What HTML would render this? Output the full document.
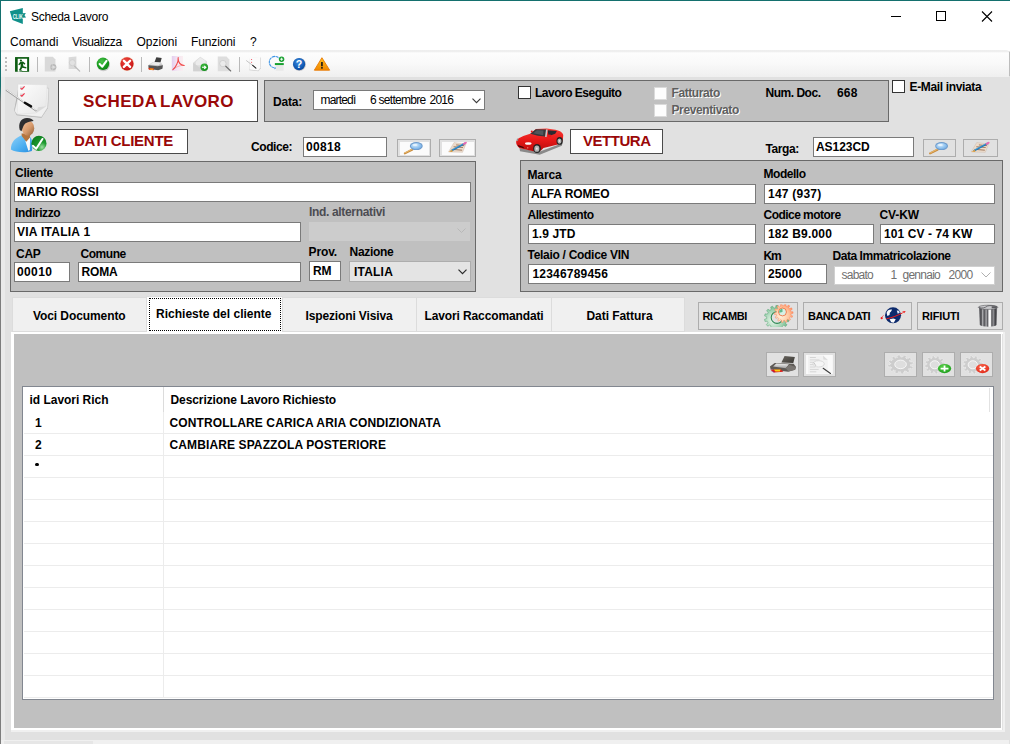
<!DOCTYPE html>
<html lang="it"><head><meta charset="utf-8"><title>Scheda Lavoro</title>
<style>
html,body{margin:0;padding:0}
body{width:1010px;height:744px;overflow:hidden;position:relative;background:#e1e1e1;font-family:"Liberation Sans",Arial,sans-serif;}
.a{position:absolute;box-sizing:content-box}
.t{position:absolute;white-space:pre;}
.dis{text-shadow:1px 1px 0 #fff}
svg{display:block;overflow:visible}
</style></head>
<body>
<div class="a" style="left:0px;top:0px;width:1010px;height:744px;background:#e1e1e1;"></div>
<div class="a" style="left:0px;top:0px;width:1010px;height:31px;background:#fff;"></div>
<div class="a" style="left:0px;top:31px;width:1010px;height:20px;background:#fff;"></div>
<div class="a" style="left:0px;top:50px;width:1009px;height:27px;background:linear-gradient(#eeeeee 0,#efefef 1.5px,#fdfdfd 3px,#f9f9f9 50%,#efefef 100%);border-radius:0 3px 0 0;"></div>
<div class="a" style="left:1009px;top:52px;width:1px;height:24px;background:#bdbdbd;"></div>
<div class="a" style="left:0px;top:0px;width:1010px;height:1px;background:#14706e;"></div>
<div class="a" style="left:0px;top:0px;width:1px;height:744px;background:linear-gradient(#14706e 0,#14706e 86px,#7d7d7d 102px,#7d7d7d);"></div>
<div class="a" style="left:1px;top:77px;width:4px;height:667px;background:#eaeaea;"></div>
<svg class="a" style="left:4px;top:2px;" width="30" height="28" viewBox="0 0 797 744"><path d="M155 245 L500 158 L500 300 L580 295 L545 350 L585 410 L500 420 L500 585 L225 475 Z" fill="#10908a"/><text x="232" y="445" font-family="Liberation Sans,sans-serif" font-weight="bold" font-size="195" fill="#eafcfb" textLength="268" lengthAdjust="spacingAndGlyphs">CLIK</text></svg>
<span class="t " style="left:31px;top:10px;font-size:12px;line-height:14px;color:#000;letter-spacing:-0.285px;">Scheda Lavoro</span>
<span class="t " style="left:10px;top:35px;font-size:12px;line-height:14px;color:#000;letter-spacing:0.053px;">Comandi</span>
<span class="t " style="left:72px;top:35px;font-size:12px;line-height:14px;color:#000;letter-spacing:-0.411px;">Visualizza</span>
<span class="t " style="left:136.5px;top:35px;font-size:12px;line-height:14px;color:#000;letter-spacing:-0.012px;">Opzioni</span>
<span class="t " style="left:191px;top:35px;font-size:12px;line-height:14px;color:#000;letter-spacing:-0.132px;">Funzioni</span>
<span class="t " style="left:250px;top:35px;font-size:12px;line-height:14px;color:#000;">?</span>
<svg class="a" style="left:880px;top:1px" width="130" height="30" viewBox="0 0 130 30"><g stroke="#000" stroke-width="1" fill="none" shape-rendering="crispEdges"><path d="M11 15.5h10"/><rect x="56.5" y="10.5" width="9" height="9"/></g><path d="M102 10.5l10 10M112 10.5l-10 10" stroke="#000" stroke-width="1.1" fill="none"/></svg>
<div class="a" style="left:5px;top:57px;width:2px;height:2px;background:#bcbcbc"></div>
<div class="a" style="left:5px;top:61px;width:2px;height:2px;background:#bcbcbc"></div>
<div class="a" style="left:5px;top:65px;width:2px;height:2px;background:#bcbcbc"></div>
<div class="a" style="left:5px;top:69px;width:2px;height:2px;background:#bcbcbc"></div>
<div class="a" style="left:37px;top:57px;width:1px;height:15px;background:#b9b9b9"></div>
<div class="a" style="left:89px;top:57px;width:1px;height:15px;background:#b9b9b9"></div>
<div class="a" style="left:141px;top:57px;width:1px;height:15px;background:#b9b9b9"></div>
<div class="a" style="left:239px;top:57px;width:1px;height:15px;background:#b9b9b9"></div>
<svg class="a" style="left:2px;top:52px;" width="90" height="26" viewBox="0 0 1010 292"><rect x="146" y="57" width="158" height="165" fill="#0d5c12"/><path d="M176 75 H282 V212 H222 V222 H176 Z" fill="#fff"/><path d="M282 180 H304 V222 H282Z" fill="#fff" opacity=".0"/><circle cx="212" cy="95" r="12" fill="#0d5c12"/><path d="M205 110 L235 108 L262 130 L255 142 L236 130 L240 160 L275 172 L272 186 L228 176 L212 205 L190 205 L208 168 L210 135 L192 150 L182 140 Z" fill="#0d5c12"/><rect x="196" y="207" width="30" height="12" fill="#0d5c12"/><path d="M480 52 H570 L600 85 V220 H480Z" fill="#d9d9d9"/><circle cx="576" cy="170" r="34" fill="#b9b9b9"/><circle cx="576" cy="170" r="16" fill="#e4e4e4"/><path d="M566 135v70M541 170h70" stroke="#d0d0d0" stroke-width="8"/><path d="M748 60 L835 50 V190 H748Z" fill="#dadada"/><circle cx="790" cy="120" r="34" fill="#e2e2e2" stroke="#cfcfcf" stroke-width="10"/><path d="M815 160 L872 215" stroke="#bdbdbd" stroke-width="14" stroke-linecap="round"/></svg>
<svg class="a" style="left:90px;top:52px;" width="90" height="26" viewBox="0 0 1010 292"><defs><radialGradient id="gck" cx=".4" cy=".3" r=".8"><stop offset="0" stop-color="#4cc24c"/><stop offset=".6" stop-color="#169a1c"/><stop offset="1" stop-color="#0d7a14"/></radialGradient><radialGradient id="grx" cx=".4" cy=".3" r=".8"><stop offset="0" stop-color="#ee4a40"/><stop offset=".7" stop-color="#d01c1c"/><stop offset="1" stop-color="#b01010"/></radialGradient><linearGradient id="gpb" x1="0" y1="0" x2="0" y2="1"><stop offset="0" stop-color="#e4e4e4"/><stop offset="1" stop-color="#9a9a9a"/></linearGradient></defs><ellipse cx="150" cy="142" rx="74" ry="74" fill="#c9c9c9"/><circle cx="145" cy="133" r="70" fill="url(#gck)"/><path d="M108 135 L138 165 L185 100" stroke="#fff" stroke-width="24" fill="none" stroke-linecap="round" stroke-linejoin="round"/><circle cx="415" cy="133" r="80" fill="#f6c9a8" opacity=".8"/><circle cx="415" cy="133" r="74" fill="url(#grx)"/><path d="M380 98 L450 168 M450 98 L380 168" stroke="#fff" stroke-width="27" fill="none" stroke-linecap="round"/><path d="M745 58 L805 66 L790 120 L725 112Z" fill="#3e3e3e"/><path d="M655 150 L700 112 L800 118 L818 150 L812 185 L770 200 L660 185Z" fill="url(#gpb)"/><path d="M655 150 L760 160 L818 150 L812 188 L765 205 L660 188Z" fill="#555"/><path d="M672 140 L710 118 L790 124 L770 150Z" fill="#ececec"/><path d="M655 178 L720 186 L715 205 L660 200Z" fill="#e03818"/><path d="M675 184 L712 188 L708 200 L678 198Z" fill="#f4c020"/></svg>
<svg class="a" style="left:165px;top:52px;" width="90" height="26" viewBox="0 0 1010 292"><defs><linearGradient id="gpdf" x1="0" y1="0" x2="1" y2="0"><stop offset="0" stop-color="#e4cdee"/><stop offset=".5" stop-color="#f3e6f4"/><stop offset="1" stop-color="#fbeef0"/></linearGradient><radialGradient id="ggo" cx=".4" cy=".3" r=".8"><stop offset="0" stop-color="#3fba3f"/><stop offset="1" stop-color="#0f8a18"/></radialGradient></defs><rect x="76" y="45" width="126" height="166" fill="url(#gpdf)"/><path d="M148 62 C152 110 122 170 88 198 M146 72 C150 122 175 150 215 152" stroke="#f04848" stroke-width="12" fill="none" stroke-linecap="round"/><path d="M98 188 C140 160 170 150 212 150" stroke="#f04848" stroke-width="9" fill="none" stroke-linecap="round" opacity=".45"/><path d="M316 120 L395 52 L470 105 L470 215 L316 215Z" fill="#dcdcdc"/><path d="M345 110 L395 62 L455 100 L455 150 L345 150Z" fill="#ececec"/><path d="M316 122 L395 180 L470 118 V215 H316Z" fill="#d2d2d2"/><circle cx="441" cy="172" r="42" fill="url(#ggo)"/><path d="M415 172 H452 M440 155 L460 172 L440 189" stroke="#fff" stroke-width="12" fill="none" stroke-linejoin="round"/><path d="M592 50 H690 L722 85 V215 H592Z" fill="#dedede"/><circle cx="650" cy="130" r="36" fill="#ebebeb" stroke="#cdcdcd" stroke-width="10"/><path d="M682 160 L738 213" stroke="#6e6e6e" stroke-width="13" stroke-linecap="round"/></svg>
<svg class="a" style="left:240px;top:52px;" width="100" height="26" viewBox="0 0 1010 263"><defs><radialGradient id="ghl" cx=".45" cy=".35" r=".75"><stop offset="0" stop-color="#3f8ee0"/><stop offset=".7" stop-color="#0c55b0"/><stop offset="1" stop-color="#083c88"/></radialGradient><linearGradient id="gwr" x1="0" y1="0" x2="0" y2="1"><stop offset="0" stop-color="#ffc020"/><stop offset="1" stop-color="#f08800"/></linearGradient></defs><path d="M100 60 L212 55 L210 165 L185 195 L92 185Z" fill="#d0d0d0"/><path d="M98 55 L205 50 L205 160 L182 186 L95 178Z" fill="#fbfbfb"/><circle cx="116" cy="76" r="6" fill="#f05060"/><circle cx="116" cy="104" r="6" fill="#f05060"/><path d="M65 88 L128 136" stroke="#b5b5b5" stroke-width="8" stroke-linecap="round"/><path d="M128 136 L160 163" stroke="#1a1a1a" stroke-width="11" stroke-linecap="round"/><path d="M345 160 A58 58 0 1 1 395 62" stroke="#3f95e6" stroke-width="11" fill="none" stroke-dasharray="30 5"/><path d="M345 175 L352 150 L372 166Z" fill="#3f95e6"/><rect x="360" y="132" width="80" height="58" fill="#e9e9e9"/><rect x="352" y="112" width="90" height="20" fill="#18a030"/><circle cx="420" cy="73" r="27" fill="#18a030"/><path d="M420 58 V88 M405 73 H435" stroke="#fff" stroke-width="9"/><circle cx="600" cy="126" r="66" fill="#c4c4c8"/><circle cx="597" cy="122" r="62" fill="url(#ghl)"/><text x="597" y="162" text-anchor="middle" font-family="Liberation Sans,sans-serif" font-weight="bold" font-size="108" fill="#fff">?</text><path d="M828 58 L906 184 L751 184Z" fill="url(#gwr)" stroke="#e87800" stroke-width="9" stroke-linejoin="round"/><path d="M828 100 V145" stroke="#1a1a1a" stroke-width="17"/><rect x="819" y="153" width="18" height="15" fill="#1a1a1a"/></svg>
<svg class="a" style="left:2px;top:78px;" width="54" height="42" viewBox="0 0 957 744"><defs><linearGradient id="gnp" x1="0" y1="0" x2="1" y2="1"><stop offset="0" stop-color="#fdfdfd"/><stop offset="1" stop-color="#e6e6e6"/></linearGradient><linearGradient id="gpen" x1="0" y1="0" x2="0" y2="1"><stop offset="0" stop-color="#f2f2f2"/><stop offset="1" stop-color="#8a8a8a"/></linearGradient><filter id="fb1" x="-20%" y="-20%" width="140%" height="140%"><feGaussianBlur stdDeviation="14"/></filter></defs><path d="M215 570 L300 120 L830 175 L815 530 L700 705 L260 660Z" fill="#8e8e8e" opacity=".55" filter="url(#fb1)"/><path d="M222 585 L330 150 L828 180 L808 525 L700 692 L268 648Z" fill="#f0f0f0" stroke="#c4c4c4" stroke-width="6"/><path d="M285 110 L800 120 L780 500 L600 622 L270 640Z" fill="url(#gnp)" stroke="#d2d2d2" stroke-width="5"/><path d="M780 500 L600 622 L640 520Z" fill="#dadada"/><rect x="318" y="150" width="60" height="55" fill="#dcdcdc"/><rect x="318" y="275" width="60" height="55" fill="#dcdcdc"/><path d="M330 180 L352 200 L400 148" stroke="#f0334a" stroke-width="20" fill="none"/><path d="M330 302 L352 322 L400 272" stroke="#f0334a" stroke-width="20" fill="none"/><path d="M80 218 L600 578" stroke="#9c9c9c" stroke-width="30" stroke-linecap="round"/><path d="M82 210 L598 568" stroke="#f3f3f3" stroke-width="17" stroke-linecap="round"/><path d="M405 440 L515 503" stroke="#0c0c0c" stroke-width="42" stroke-linecap="round"/></svg>
<div class="a" style="left:58px;top:80px;width:198px;height:40px;background:#fff;border:1px solid #4a4a4a;"></div>
<span class="t " style="left:83px;top:91.5px;font-size:17px;line-height:19px;font-weight:bold;color:#9a0808;letter-spacing:0.433px;word-spacing:-2px;">SCHEDA LAVORO</span>
<div class="a" style="left:264px;top:80px;width:623px;height:40px;background:#c0c0c0;border:1px solid #696969;"></div>
<span class="t " style="left:273px;top:95px;font-size:12px;line-height:14px;font-weight:bold;color:#000;letter-spacing:-0.163px;">Data:</span>
<div class="a" style="left:313px;top:90px;width:170px;height:17.5px;background:#fff;border:1px solid #7a7a7a;"></div>
<span class="t " style="left:320.5px;top:92.5px;font-size:12px;line-height:14px;color:#000;letter-spacing:-0.810px;">martedì</span>
<span class="t " style="left:370px;top:92.5px;font-size:12px;line-height:14px;color:#000;letter-spacing:-0.713px;">6 settembre</span>
<span class="t " style="left:429.5px;top:92.5px;font-size:12px;line-height:14px;color:#000;letter-spacing:-0.797px;">2016</span>
<svg class="a" style="left:471.5px;top:97.5px" width="9" height="6" viewBox="0 0 9 6"><path d="M0.5 0.7l4 4 4-4" stroke="#3a3a3a" stroke-width="1.1" fill="none"/></svg>
<div class="a" style="left:518px;top:86px;width:11px;height:11px;background:#fff;border:1px solid #333;"></div>
<span class="t " style="left:535px;top:86px;font-size:12px;line-height:14px;font-weight:bold;color:#000;letter-spacing:-0.506px;">Lavoro Eseguito</span>
<div class="a" style="left:654px;top:87px;width:11px;height:11px;background:#fdfdfd;border:1px solid #dadada;"></div>
<span class="t dis" style="left:671.5px;top:85.5px;font-size:12px;line-height:14px;font-weight:bold;color:#5e5e5e;letter-spacing:-0.411px;">Fatturato</span>
<div class="a" style="left:654px;top:104px;width:11px;height:11px;background:#fdfdfd;border:1px solid #dadada;"></div>
<span class="t dis" style="left:671.5px;top:102.5px;font-size:12px;line-height:14px;font-weight:bold;color:#5e5e5e;letter-spacing:-0.385px;">Preventivato</span>
<span class="t " style="left:765.5px;top:86px;font-size:12px;line-height:14px;font-weight:bold;color:#000;letter-spacing:-0.481px;">Num. Doc.</span>
<span class="t " style="left:837px;top:86px;font-size:12px;line-height:14px;font-weight:bold;color:#000;letter-spacing:0.161px;">668</span>
<div class="a" style="left:892px;top:80px;width:11px;height:11px;background:#fff;border:1px solid #333;"></div>
<span class="t " style="left:909.5px;top:80px;font-size:12px;line-height:14px;font-weight:bold;color:#000;letter-spacing:-0.354px;">E-Mail inviata</span>
<svg class="a" style="left:2px;top:114px;" width="54" height="44" viewBox="0 0 913 744"><defs><linearGradient id="gsk" x1="0" y1="0" x2="1" y2="1"><stop offset="0" stop-color="#f6c49c"/><stop offset=".55" stop-color="#d79a6c"/><stop offset="1" stop-color="#8c5a32"/></linearGradient><linearGradient id="gbd" x1="0" y1="0" x2="1" y2="1"><stop offset="0" stop-color="#8fd0f8"/><stop offset=".6" stop-color="#4aaef0"/><stop offset="1" stop-color="#2a8de0"/></linearGradient><radialGradient id="gch" cx=".7" cy=".75" r=".9"><stop offset="0" stop-color="#9be0a0"/><stop offset=".35" stop-color="#1f9a30"/><stop offset="1" stop-color="#0a7a1c"/></radialGradient></defs><path d="M150 600 C150 470 230 400 335 360 L470 380 C520 420 520 560 505 625 C400 660 230 650 150 600Z" fill="url(#gbd)"/><path d="M395 455 L475 395 L470 610 L445 620Z" fill="#fafafa"/><path d="M330 330 L480 330 L470 400 L410 470 L335 370Z" fill="#b5743e"/><ellipse cx="440" cy="240" rx="105" ry="128" fill="url(#gsk)"/><path d="M300 270 C270 160 320 70 420 68 C480 66 525 90 535 120 C470 130 400 140 370 190 C355 220 345 250 330 290Z" fill="#2e2e30"/><circle cx="625" cy="497" r="128" fill="url(#gch)"/><path d="M522 538 L578 588 L684 422" stroke="#fff" stroke-width="34" fill="none" stroke-linecap="round" stroke-linejoin="round"/></svg>
<div class="a" style="left:58px;top:129px;width:128px;height:23px;background:#fff;border:1px solid #4a4a4a;"></div>
<span class="t " style="left:74px;top:132px;font-size:15px;line-height:17px;font-weight:bold;color:#9a0808;letter-spacing:-0.266px;">DATI CLIENTE</span>
<span class="t " style="left:251px;top:140px;font-size:12px;line-height:14px;font-weight:bold;color:#000;letter-spacing:-0.429px;">Codice:</span>
<div class="a" style="left:303px;top:137px;width:82px;height:18px;background:#fff;border:1px solid #7a7a7a;"></div>
<span class="t " style="left:306px;top:140px;font-size:12px;line-height:14px;font-weight:bold;color:#000;letter-spacing:0.328px;">00818</span>
<div class="a" style="left:397px;top:139px;width:32px;height:16px;background:#e1e1e1;border:1px solid #adadad"></div><div class="a" style="left:439px;top:139px;width:35px;height:16px;background:#e1e1e1;border:1px solid #adadad"></div><div class="a" style="left:400px;top:141.5px;width:28.5px;height:13px;background:#fbfbfb"></div><div class="a" style="left:442px;top:141.5px;width:31.5px;height:13px;background:#fbfbfb"></div><svg class="a" style="left:394px;top:134px;" width="86" height="26" viewBox="0 0 1010 305"><defs><radialGradient id="glens" cx=".4" cy=".35" r=".8"><stop offset="0" stop-color="#d8ecfc"/><stop offset=".6" stop-color="#8cc0ee"/><stop offset="1" stop-color="#6a9ed8"/></radialGradient></defs><path d="M217 182 L127 227" stroke="#c98a3a" stroke-width="24" stroke-linecap="round"/><path d="M215 178 L129 222" stroke="#f0c880" stroke-width="9" stroke-linecap="round"/><ellipse cx="262" cy="142" rx="76" ry="47" fill="#6f9ccc"/><ellipse cx="262" cy="142" rx="64" ry="37" fill="url(#glens)"/><ellipse cx="247" cy="128" rx="30" ry="12" fill="#eef8ff" opacity=".8"/><path d="M705 100 L845 118 L805 215 L640 210Z" fill="#ecdccc" stroke="#c9b6a6" stroke-width="5"/><path d="M700 150 L810 158 M680 180 L800 190 M730 128 L825 137" stroke="#7a4a2a" stroke-width="8"/><path d="M835 108 L668 200" stroke="#1f78b8" stroke-width="20" stroke-linecap="butt"/><path d="M833 103 L670 193" stroke="#58b0e6" stroke-width="6"/><path d="M820 116 L845 102" stroke="#e868b0" stroke-width="22" stroke-linecap="round"/><path d="M680 186 L645 212 L692 204Z" fill="#f0a030"/></svg>
<svg class="a" style="left:508px;top:120px;" width="64" height="40" viewBox="0 0 1010 631"><defs><linearGradient id="gcar" x1="0" y1="0" x2="0" y2="1"><stop offset="0" stop-color="#f83a34"/><stop offset=".5" stop-color="#e81818"/><stop offset="1" stop-color="#b80c0c"/></linearGradient><filter id="fb2" x="-20%" y="-50%" width="140%" height="200%"><feGaussianBlur stdDeviation="12"/></filter></defs><path d="M180 440 L480 505 L860 365 L850 405 L500 548 L190 492Z" fill="#666" opacity=".7" filter="url(#fb2)"/><path d="M128 345 C140 300 170 270 350 215 L440 140 L610 135 L720 150 C800 160 860 190 872 235 C870 300 860 340 842 372 L770 390 L560 442 L520 482 L400 494 L180 442 C150 420 128 390 128 345Z" fill="url(#gcar)"/><path d="M352 216 L440 145 L603 150 L590 262 L470 250Z" fill="#34383c"/><path d="M400 210 L455 160 L560 165 L555 240Z" fill="#5c6468" opacity=".7"/><path d="M625 160 L770 172 L745 215 L690 235 L640 250Z" fill="#2a2a30"/><path d="M600 150 L625 150 L610 270 L585 268Z" fill="#c9c9c9"/><ellipse cx="655" cy="252" rx="28" ry="22" fill="#e81818"/><circle cx="375" cy="180" r="16" fill="#e81818"/><ellipse cx="458" cy="450" rx="62" ry="72" fill="#242424"/><ellipse cx="455" cy="452" rx="40" ry="50" fill="#b4b4b4"/><ellipse cx="455" cy="452" rx="14" ry="18" fill="#e8e8e8"/><ellipse cx="815" cy="330" rx="50" ry="62" fill="#242424"/><ellipse cx="812" cy="332" rx="32" ry="42" fill="#b4b4b4"/><ellipse cx="812" cy="332" rx="11" ry="15" fill="#e8e8e8"/><ellipse cx="320" cy="370" rx="52" ry="19" fill="#fdfdfd"/><ellipse cx="150" cy="312" rx="12" ry="22" fill="#9a8a8a"/><path d="M155 395 L250 425 L245 445 L165 420Z" fill="#3a0606"/><circle cx="312" cy="438" r="10" fill="#f8b0a0"/></svg>
<div class="a" style="left:570px;top:129px;width:91px;height:23px;background:#fff;border:1px solid #4a4a4a;"></div>
<span class="t " style="left:583px;top:132px;font-size:15px;line-height:17px;font-weight:bold;color:#9a0808;letter-spacing:-0.471px;">VETTURA</span>
<span class="t " style="left:765.5px;top:142px;font-size:12px;line-height:14px;font-weight:bold;color:#000;letter-spacing:-0.397px;">Targa:</span>
<div class="a" style="left:813px;top:137px;width:99px;height:18px;background:#fff;border:1px solid #7a7a7a;"></div>
<span class="t " style="left:816px;top:140px;font-size:12px;line-height:14px;font-weight:bold;color:#000;letter-spacing:-0.062px;">AS123CD</span>
<div class="a" style="left:923px;top:139px;width:31px;height:16px;background:#e1e1e1;border:1px solid #adadad"></div><div class="a" style="left:963px;top:139px;width:33px;height:16px;background:#e1e1e1;border:1px solid #adadad"></div><svg class="a" style="left:918px;top:134px;" width="86" height="26" viewBox="0 0 1010 305"><path d="M232 182 L142 227" stroke="#c98a3a" stroke-width="24" stroke-linecap="round"/><path d="M230 178 L144 222" stroke="#f0c880" stroke-width="9" stroke-linecap="round"/><ellipse cx="277" cy="142" rx="76" ry="47" fill="#6f9ccc"/><ellipse cx="277" cy="142" rx="64" ry="37" fill="url(#glens)"/><ellipse cx="262" cy="128" rx="30" ry="12" fill="#eef8ff" opacity=".8"/><path d="M690 100 L830 118 L790 215 L625 210Z" fill="#ecdccc" stroke="#c9b6a6" stroke-width="5"/><path d="M685 150 L795 158 M665 180 L785 190 M715 128 L810 137" stroke="#7a4a2a" stroke-width="8"/><path d="M820 108 L653 200" stroke="#1f78b8" stroke-width="20" stroke-linecap="butt"/><path d="M818 103 L655 193" stroke="#58b0e6" stroke-width="6"/><path d="M805 116 L830 102" stroke="#e868b0" stroke-width="22" stroke-linecap="round"/><path d="M665 186 L630 212 L677 204Z" fill="#f0a030"/></svg>
<div class="a" style="left:10px;top:161px;width:464px;height:129px;background:#c0c0c0;border:1px solid #696969;"></div>
<span class="t " style="left:15px;top:166px;font-size:12px;line-height:14px;font-weight:bold;color:#000;letter-spacing:-0.286px;">Cliente</span>
<div class="a" style="left:14px;top:182px;width:455px;height:18px;background:#fff;border:1px solid #7a7a7a;"></div>
<span class="t " style="left:17px;top:185px;font-size:12px;line-height:14px;font-weight:bold;color:#000;letter-spacing:0.122px;">MARIO ROSSI</span>
<span class="t " style="left:15px;top:206px;font-size:12px;line-height:14px;font-weight:bold;color:#000;letter-spacing:-0.371px;">Indirizzo</span>
<div class="a" style="left:14px;top:222px;width:285px;height:18px;background:#fff;border:1px solid #7a7a7a;"></div>
<span class="t " style="left:17px;top:225px;font-size:12px;line-height:14px;font-weight:bold;color:#000;letter-spacing:0.257px;">VIA ITALIA 1</span>
<span class="t " style="left:309px;top:204.5px;font-size:12px;line-height:14px;font-weight:bold;color:#4c4c52;letter-spacing:-0.332px;">Ind. alternativi</span>
<div class="a" style="left:309px;top:222px;width:161px;height:19px;background:#cccccc;"></div>
<svg class="a" style="left:457px;top:228px" width="9" height="6" viewBox="0 0 9 6"><path d="M0.5 0.5l4 4 4-4" stroke="#b8b8b8" stroke-width="1" fill="none"/></svg>
<span class="t " style="left:16px;top:246.5px;font-size:12px;line-height:14px;font-weight:bold;color:#000;letter-spacing:-0.281px;">CAP</span>
<span class="t " style="left:80.5px;top:246.5px;font-size:12px;line-height:14px;font-weight:bold;color:#000;letter-spacing:-0.450px;">Comune</span>
<span class="t " style="left:308.5px;top:245px;font-size:12px;line-height:14px;font-weight:bold;color:#000;letter-spacing:-0.122px;">Prov.</span>
<span class="t " style="left:349.5px;top:245px;font-size:12px;line-height:14px;font-weight:bold;color:#000;letter-spacing:-0.286px;">Nazione</span>
<div class="a" style="left:14px;top:262px;width:54px;height:18px;background:#fff;border:1px solid #7a7a7a;"></div>
<span class="t " style="left:17px;top:265px;font-size:12px;line-height:14px;font-weight:bold;color:#000;letter-spacing:0.368px;">00010</span>
<div class="a" style="left:78px;top:262px;width:221px;height:18px;background:#fff;border:1px solid #7a7a7a;"></div>
<span class="t " style="left:81.5px;top:265px;font-size:12px;line-height:14px;font-weight:bold;color:#000;letter-spacing:-0.168px;">ROMA</span>
<div class="a" style="left:309px;top:261px;width:30px;height:18px;background:#fff;border:1px solid #7a7a7a;"></div>
<span class="t " style="left:313px;top:264px;font-size:12px;line-height:14px;font-weight:bold;color:#000;letter-spacing:-0.086px;">RM</span>
<div class="a" style="left:349px;top:261px;width:120px;height:19px;background:#e4e4e4;border:1px solid #adadad;"></div>
<span class="t " style="left:354px;top:265px;font-size:12px;line-height:14px;font-weight:bold;color:#000;letter-spacing:0.206px;">ITALIA</span>
<svg class="a" style="left:458px;top:269px" width="9" height="6" viewBox="0 0 9 6"><path d="M0.5 0.7l4 4 4-4" stroke="#2a2a2a" stroke-width="1.2" fill="none"/></svg>
<div class="a" style="left:520px;top:160px;width:481px;height:130px;background:#c0c0c0;border:1px solid #696969;"></div>
<span class="t " style="left:527.5px;top:168px;font-size:12px;line-height:14px;font-weight:bold;color:#000;letter-spacing:-0.138px;">Marca</span>
<div class="a" style="left:528px;top:184px;width:226px;height:18px;background:#fff;border:1px solid #7a7a7a;"></div>
<span class="t " style="left:531px;top:187px;font-size:12px;line-height:14px;font-weight:bold;color:#000;letter-spacing:-0.106px;">ALFA ROMEO</span>
<span class="t " style="left:527.5px;top:208px;font-size:12px;line-height:14px;font-weight:bold;color:#000;letter-spacing:-0.500px;">Allestimento</span>
<div class="a" style="left:528px;top:224px;width:226px;height:18px;background:#fff;border:1px solid #7a7a7a;"></div>
<span class="t " style="left:532px;top:227px;font-size:12px;line-height:14px;font-weight:bold;color:#000;letter-spacing:0.118px;">1.9 JTD</span>
<span class="t " style="left:527.5px;top:248px;font-size:12px;line-height:14px;font-weight:bold;color:#000;letter-spacing:-0.294px;">Telaio / Codice VIN</span>
<div class="a" style="left:528px;top:264px;width:226px;height:18px;background:#fff;border:1px solid #7a7a7a;"></div>
<span class="t " style="left:532.5px;top:267px;font-size:12px;line-height:14px;font-weight:bold;color:#000;letter-spacing:0.192px;">12346789456</span>
<span class="t " style="left:763.5px;top:167px;font-size:12px;line-height:14px;font-weight:bold;color:#000;letter-spacing:-0.473px;">Modello</span>
<div class="a" style="left:764px;top:184px;width:229px;height:18px;background:#fff;border:1px solid #7a7a7a;"></div>
<span class="t " style="left:768px;top:187px;font-size:12px;line-height:14px;font-weight:bold;color:#000;letter-spacing:0.238px;">147 (937)</span>
<span class="t " style="left:763.5px;top:208px;font-size:12px;line-height:14px;font-weight:bold;color:#000;letter-spacing:-0.538px;">Codice motore</span>
<span class="t " style="left:879.5px;top:208px;font-size:12px;line-height:14px;font-weight:bold;color:#000;letter-spacing:-0.103px;">CV-KW</span>
<div class="a" style="left:764px;top:224px;width:108px;height:18px;background:#fff;border:1px solid #7a7a7a;"></div>
<span class="t " style="left:768px;top:227px;font-size:12px;line-height:14px;font-weight:bold;color:#000;letter-spacing:0.197px;">182 B9.000</span>
<div class="a" style="left:880px;top:224px;width:113px;height:18px;background:#fff;border:1px solid #7a7a7a;"></div>
<span class="t " style="left:884px;top:227px;font-size:12px;line-height:14px;font-weight:bold;color:#000;letter-spacing:0.083px;">101 CV - 74 KW</span>
<span class="t " style="left:763.5px;top:248.5px;font-size:12px;line-height:14px;font-weight:bold;color:#000;letter-spacing:-1.172px;">Km</span>
<span class="t " style="left:832.5px;top:248.5px;font-size:12px;line-height:14px;font-weight:bold;color:#000;letter-spacing:-0.445px;">Data Immatricolazione</span>
<div class="a" style="left:764px;top:264px;width:61px;height:18px;background:#fff;border:1px solid #7a7a7a;"></div>
<span class="t " style="left:768px;top:267px;font-size:12px;line-height:14px;font-weight:bold;color:#000;letter-spacing:0.128px;">25000</span>
<div class="a" style="left:834px;top:265.5px;width:159px;height:17px;background:#fff;border:1px solid #d0d0d0;"></div>
<span class="t " style="left:841.5px;top:267.5px;font-size:12px;line-height:14px;color:#707070;letter-spacing:-0.753px;">sabato</span>
<span class="t " style="left:890.5px;top:267.5px;font-size:12px;line-height:14px;color:#707070;">1</span>
<span class="t " style="left:902.5px;top:267.5px;font-size:12px;line-height:14px;color:#707070;letter-spacing:-0.743px;">gennaio</span>
<span class="t " style="left:948.5px;top:267.5px;font-size:12px;line-height:14px;color:#707070;letter-spacing:-0.672px;">2000</span>
<svg class="a" style="left:981px;top:272px" width="10" height="6" viewBox="0 0 10 6"><path d="M0.5 0.5l4.5 4.5 4.5-4.5" stroke="#b0b0b0" stroke-width="1" fill="none"/></svg>
<div class="a" style="left:12px;top:297px;width:673px;height:35px;background:#f0f0f0;border:1px solid #dcdcdc;box-sizing:border-box;"></div>
<div class="a" style="left:416px;top:298px;width:1px;height:34px;background:#dcdcdc;"></div>
<div class="a" style="left:551px;top:298px;width:1px;height:34px;background:#dcdcdc;"></div>
<div class="a" style="left:282px;top:298px;width:1px;height:34px;background:#dcdcdc;"></div>
<div class="a" style="left:146px;top:296px;width:137px;height:37px;background:#fff;border:1px solid #dcdcdc;box-sizing:border-box;border-bottom:none;"></div>
<div class="a" style="left:148.5px;top:298px;width:132.5px;height:33px;border:1px dotted #000;box-sizing:border-box;"></div>
<span class="t " style="left:33px;top:309px;font-size:12px;line-height:14px;font-weight:bold;color:#000;letter-spacing:-0.090px;">Voci Documento</span>
<span class="t " style="left:156px;top:307px;font-size:12px;line-height:14px;font-weight:bold;color:#000;letter-spacing:0.008px;">Richieste del cliente</span>
<span class="t " style="left:305.5px;top:309px;font-size:12px;line-height:14px;font-weight:bold;color:#000;letter-spacing:-0.131px;">Ispezioni Visiva</span>
<span class="t " style="left:424.5px;top:309px;font-size:12px;line-height:14px;font-weight:bold;color:#000;letter-spacing:-0.123px;">Lavori Raccomandati</span>
<span class="t " style="left:586.5px;top:309px;font-size:12px;line-height:14px;font-weight:bold;color:#000;letter-spacing:-0.056px;">Dati Fattura</span>
<div class="a" style="left:698px;top:302px;width:100px;height:28px;background:#e1e1e1;border:1px solid #adadad;box-sizing:border-box;"></div>
<span class="t " style="left:702.5px;top:310px;font-size:11px;line-height:12px;font-weight:bold;color:#000;letter-spacing:-0.362px;">RICAMBI</span>
<div class="a" style="left:803px;top:302px;width:109px;height:28px;background:#e1e1e1;border:1px solid #adadad;box-sizing:border-box;"></div>
<span class="t " style="left:808px;top:310px;font-size:11px;line-height:12px;font-weight:bold;color:#000;letter-spacing:-0.519px;">BANCA DATI</span>
<div class="a" style="left:917px;top:302px;width:86px;height:28px;background:#e1e1e1;border:1px solid #adadad;box-sizing:border-box;"></div>
<span class="t " style="left:922px;top:310px;font-size:11px;line-height:12px;font-weight:bold;color:#000;letter-spacing:-0.143px;">RIFIUTI</span>
<svg class="a" style="left:755px;top:298px;" width="50" height="36" viewBox="0 0 1010 727"><defs><radialGradient id="ggr" cx=".35" cy=".6" r=".8"><stop offset="0" stop-color="#eef8ee"/><stop offset=".6" stop-color="#8fcaa4"/><stop offset="1" stop-color="#3f9a64"/></radialGradient><radialGradient id="gor" cx=".35" cy=".65" r=".8"><stop offset="0" stop-color="#fff2dc"/><stop offset=".55" stop-color="#ffc49c"/><stop offset="1" stop-color="#ff7a4c"/></radialGradient></defs><clipPath id="cpg"><rect x="170" y="130" width="640" height="458"/></clipPath><g clip-path="url(#cpg)"><path d="M644.0 420.5 L687.0 438.3 L677.0 479.7 L630.5 475.7 L614.9 506.9 L646.0 541.7 L618.9 574.6 L578.8 550.9 L551.2 572.2 L564.1 617.0 L525.4 634.9 L499.6 596.1 L465.4 603.4 L457.6 649.4 L415.0 648.8 L408.6 602.6 L374.7 594.3 L347.7 632.3 L309.6 613.3 L323.8 568.9 L296.8 546.7 L256.0 569.3 L230.0 535.6 L262.0 501.7 L247.3 470.1 L200.8 472.7 L191.9 431.0 L235.5 414.4 L236.0 379.5 L193.0 361.7 L203.0 320.3 L249.5 324.3 L265.1 293.1 L234.0 258.3 L261.1 225.4 L301.2 249.1 L328.8 227.8 L315.9 183.0 L354.6 165.1 L380.4 203.9 L414.6 196.6 L422.4 150.6 L465.0 151.2 L471.4 197.4 L505.3 205.7 L532.3 167.7 L570.4 186.7 L556.2 231.1 L583.2 253.3 L624.0 230.7 L650.0 264.4 L618.0 298.3 L632.7 329.9 L679.2 327.3 L688.1 369.0 L644.5 385.6Z" fill="url(#ggr)" stroke="#3f9a64" stroke-width="8" stroke-linejoin="round"/><circle cx="445" cy="395" r="118" fill="#e1e1e1" stroke="#2f8a54" stroke-width="22"/><path d="M725.3 342.1 L761.3 361.8 L749.0 391.8 L709.6 380.6 L694.8 401.5 L718.7 434.9 L694.6 456.5 L663.9 429.3 L641.6 441.8 L648.6 482.2 L617.5 491.3 L601.7 453.4 L576.2 455.0 L564.9 494.4 L533.0 489.1 L535.1 448.1 L511.5 438.4 L484.2 469.1 L457.8 450.5 L477.5 414.5 L460.4 395.5 L422.5 411.3 L406.8 383.0 L440.1 359.2 L433.0 334.6 L392.0 332.4 L390.1 300.1 L430.5 293.1 L434.7 267.9 L398.7 248.2 L411.0 218.2 L450.4 229.4 L465.2 208.5 L441.3 175.1 L465.4 153.5 L496.1 180.7 L518.4 168.2 L511.4 127.8 L542.5 118.7 L558.3 156.6 L583.8 155.0 L595.1 115.6 L627.0 120.9 L624.9 161.9 L648.5 171.6 L675.8 140.9 L702.2 159.5 L682.5 195.5 L699.6 214.5 L737.5 198.7 L753.2 227.0 L719.9 250.8 L727.0 275.4 L768.0 277.6 L769.9 309.9 L729.5 316.9Z" fill="url(#gor)" stroke="#ff7a4c" stroke-width="8" stroke-linejoin="round"/><circle cx="555" cy="282" r="80" fill="#d8f0e6" stroke="#f4602c" stroke-width="16"/><path d="M555 282 L555 215 A67 67 0 0 0 490 300Z" fill="#62b98c"/></g></svg>
<svg class="a" style="left:870px;top:298px;" width="50" height="36" viewBox="0 0 1010 727"><circle cx="465" cy="350" r="162" fill="#0c2a6c"/><path d="M335 300 C345 250 400 225 445 235 L425 275 L400 300 L395 345 L350 365Z" fill="#fbfbfb"/><path d="M395 430 L470 415 L520 430 L480 500 L430 490Z" fill="#fbfbfb"/><path d="M540 250 L585 255 L600 300 L560 320Z" fill="#dfe8f6"/><path d="M330 420 C450 400 560 350 660 300" stroke="#f01818" stroke-width="20" fill="none"/><path d="M650 275 L722 262 L690 310Z" fill="#f01818"/><circle cx="236" cy="408" r="22" fill="#f01818"/><path d="M240 390 C250 370 262 358 276 350" stroke="#f01818" stroke-width="12" fill="none"/></svg>
<svg class="a" style="left:960px;top:298px;" width="50" height="36" viewBox="0 0 1010 727"><defs><linearGradient id="gtr" x1="0" y1="0" x2="1" y2="0"><stop offset="0" stop-color="#6a6a6e"/><stop offset=".12" stop-color="#4a4a4e"/><stop offset=".2" stop-color="#b5b5b8"/><stop offset=".28" stop-color="#4e4e52"/><stop offset=".4" stop-color="#a9a9ac"/><stop offset=".46" stop-color="#55555a"/><stop offset=".56" stop-color="#fafafa"/><stop offset=".64" stop-color="#f0f0f0"/><stop offset=".7" stop-color="#5a5a5e"/><stop offset=".8" stop-color="#8a8a8e"/><stop offset=".9" stop-color="#3e3e42"/><stop offset="1" stop-color="#7a7a7e"/></linearGradient></defs><path d="M385 200 L750 200 L740 545 C700 590 450 590 400 545Z" fill="url(#gtr)"/><ellipse cx="567" cy="188" rx="198" ry="42" fill="#c9c9cc" stroke="#58585c" stroke-width="12"/><path d="M380 190 C450 215 500 200 560 160 C600 150 700 150 755 185" stroke="#4a4a4e" stroke-width="14" fill="none"/><path d="M640 165 L745 165 L745 200 L640 205Z" fill="#5c5c60"/></svg>
<div class="a" style="left:11px;top:332px;width:994px;height:400px;background:#f0f0f0;"></div>
<div class="a" style="left:11px;top:332px;width:992px;height:398px;background:#fff;"></div>
<div class="a" style="left:1002px;top:334px;width:1px;height:396px;background:#e2e2e2;"></div>
<div class="a" style="left:14px;top:334px;width:987px;height:394px;background:#c0c0c0;"></div>
<div class="a" style="left:766px;top:352px;width:33px;height:25px;background:#e1e1e1;border:1px solid #adadad;box-sizing:border-box;"></div>
<div class="a" style="left:803px;top:352px;width:33px;height:25px;background:#e1e1e1;border:1px solid #adadad;box-sizing:border-box;"></div>
<div class="a" style="left:884px;top:352px;width:33px;height:25px;background:#e1e1e1;border:1px solid #adadad;box-sizing:border-box;"></div>
<div class="a" style="left:922px;top:352px;width:33px;height:25px;background:#e1e1e1;border:1px solid #adadad;box-sizing:border-box;"></div>
<div class="a" style="left:960px;top:352px;width:33px;height:25px;background:#e1e1e1;border:1px solid #adadad;box-sizing:border-box;"></div>
<svg class="a" style="left:762px;top:348px;" width="80" height="34" viewBox="0 0 1010 429"><defs><linearGradient id="gp1" x1="0" y1="0" x2="0" y2="1"><stop offset="0" stop-color="#f0f0f0"/><stop offset="1" stop-color="#a0a0a0"/></linearGradient><linearGradient id="gp2" x1="0" y1="0" x2="1" y2="1"><stop offset="0" stop-color="#6a6660"/><stop offset="1" stop-color="#3a3834"/></linearGradient></defs><path d="M285 100 L415 112 L395 190 L245 182Z" fill="url(#gp2)"/><path d="M100 235 L160 190 L400 200 L430 240 L420 275 L330 300 L110 270Z" fill="#5e5a56"/><path d="M140 235 L180 195 L340 205 L300 255Z" fill="url(#gp1)"/><path d="M300 255 L345 210 L425 240 L415 275 L335 298Z" fill="#7a7672"/><path d="M105 275 L240 270 L270 300 L150 310Z" fill="#d81c1c"/><path d="M150 270 L235 272 L225 298 L170 295Z" fill="#f8d010"/><path d="M110 290 L160 312 L150 300Z" fill="#6a1a8a"/><rect x="556" y="88" width="338" height="240" fill="#fafafa"/><path d="M580 95 H770 L830 150 V322 H580Z" fill="#f2f2f2"/><path d="M605 120h75M605 150h120M605 180h60M605 210h50M605 240h70M605 270h110M605 300h80" stroke="#c9c9c9" stroke-width="9"/><path d="M770 95 L830 150 L775 145Z" fill="#dcdcdc"/><ellipse cx="715" cy="200" rx="72" ry="40" fill="#f6f6f6" stroke="#d2d2d2" stroke-width="10"/><path d="M655 185 L680 225" stroke="#8a8a8a" stroke-width="6"/><path d="M772 255 L865 322" stroke="#3c3c3c" stroke-width="13" stroke-linecap="round"/></svg>
<svg class="a" style="left:878px;top:346px;" width="120" height="36" viewBox="0 0 1010 303"><defs><radialGradient id="gpl" cx=".4" cy=".3" r=".8"><stop offset="0" stop-color="#58d048"/><stop offset="1" stop-color="#189a18"/></radialGradient><radialGradient id="gmi" cx=".4" cy=".3" r=".8"><stop offset="0" stop-color="#f86048"/><stop offset="1" stop-color="#e02818"/></radialGradient></defs><path d="M272.6 167.4 L294.3 175.8 L286.7 190.6 L262.9 186.3 L253.1 196.3 L266.3 211.6 L249.7 221.7 L232.0 209.1 L216.8 214.2 L217.8 232.3 L196.7 234.8 L189.9 217.4 L173.3 216.2 L161.9 232.3 L141.9 226.6 L147.8 209.0 L134.2 201.8 L113.6 211.5 L100.0 199.2 L117.0 186.1 L110.1 174.8 L85.7 175.6 L82.2 159.9 L105.8 154.9 L107.4 142.6 L85.7 134.2 L93.3 119.4 L117.1 123.7 L126.9 113.7 L113.7 98.4 L130.3 88.3 L148.0 100.9 L163.2 95.8 L162.2 77.7 L183.3 75.2 L190.1 92.6 L206.7 93.8 L218.1 77.7 L238.1 83.4 L232.2 101.0 L245.8 108.2 L266.4 98.5 L280.0 110.8 L263.0 123.9 L269.9 135.2 L294.3 134.4 L297.8 150.1 L274.2 155.1Z" fill="#cdcdcd" stroke="#f6f6f6" stroke-width="5" stroke-dasharray="9 7"/><ellipse cx="190" cy="155" rx="49" ry="36" fill="#dedede" stroke="#f8f8f8" stroke-width="8"/><path d="M543.7 169.8 L561.0 177.7 L555.0 191.9 L536.1 187.7 L528.3 197.2 L538.7 211.8 L525.5 221.3 L511.5 209.4 L499.3 214.2 L500.2 231.4 L483.3 233.9 L477.9 217.3 L464.7 216.1 L455.7 231.4 L439.7 226.0 L444.4 209.3 L433.6 202.4 L417.1 211.7 L406.3 200.0 L419.9 187.6 L414.4 176.8 L394.9 177.6 L392.2 162.7 L410.9 157.9 L412.3 146.2 L395.0 138.3 L401.0 124.1 L419.9 128.3 L427.7 118.8 L417.3 104.2 L430.5 94.7 L444.5 106.6 L456.7 101.8 L455.8 84.6 L472.7 82.1 L478.1 98.7 L491.3 99.9 L500.3 84.6 L516.3 90.0 L511.6 106.7 L522.4 113.6 L538.9 104.3 L549.7 116.0 L536.1 128.4 L541.6 139.2 L561.1 138.4 L563.8 153.3 L545.1 158.1Z" fill="#cdcdcd" stroke="#f6f6f6" stroke-width="5" stroke-dasharray="9 7"/><ellipse cx="478" cy="158" rx="39" ry="34" fill="#dedede" stroke="#f8f8f8" stroke-width="8"/><ellipse cx="560" cy="190" rx="56" ry="39" fill="url(#gpl)"/><path d="M560 165 V215 M527 190 H593" stroke="#fff" stroke-width="15"/><path d="M863.7 169.8 L881.0 177.7 L875.0 191.9 L856.1 187.7 L848.3 197.2 L858.7 211.8 L845.5 221.3 L831.5 209.4 L819.3 214.2 L820.2 231.4 L803.3 233.9 L797.9 217.3 L784.7 216.1 L775.7 231.4 L759.7 226.0 L764.4 209.3 L753.6 202.4 L737.1 211.7 L726.3 200.0 L739.9 187.6 L734.4 176.8 L714.9 177.6 L712.2 162.7 L730.9 157.9 L732.3 146.2 L715.0 138.3 L721.0 124.1 L739.9 128.3 L747.7 118.8 L737.3 104.2 L750.5 94.7 L764.5 106.6 L776.7 101.8 L775.8 84.6 L792.7 82.1 L798.1 98.7 L811.3 99.9 L820.3 84.6 L836.3 90.0 L831.6 106.7 L842.4 113.6 L858.9 104.3 L869.7 116.0 L856.1 128.4 L861.6 139.2 L881.1 138.4 L883.8 153.3 L865.1 158.1Z" fill="#cdcdcd" stroke="#f6f6f6" stroke-width="5" stroke-dasharray="9 7"/><ellipse cx="798" cy="158" rx="39" ry="34" fill="#dedede" stroke="#f8f8f8" stroke-width="8"/><ellipse cx="880" cy="190" rx="56" ry="39" fill="url(#gmi)"/><path d="M856 173 L904 207 M904 173 L856 207" stroke="#fff" stroke-width="15"/></svg>
<div class="a" style="left:22px;top:386px;width:972px;height:314px;background:#fff;border:1px solid #828790;box-sizing:border-box;"></div>
<div class="a" style="left:163px;top:387px;width:1px;height:24.5px;background:#dcdcdc;"></div>
<div class="a" style="left:163px;top:411.5px;width:1px;height:286.5px;background:#ececec;"></div>
<div class="a" style="left:989px;top:388px;width:1px;height:23.5px;background:#e2e2e2;"></div>
<div class="a" style="left:23.5px;top:433px;width:969px;height:1px;background:#ececec;"></div>
<div class="a" style="left:23.5px;top:455px;width:969px;height:1px;background:#ececec;"></div>
<div class="a" style="left:23.5px;top:477px;width:969px;height:1px;background:#ececec;"></div>
<div class="a" style="left:23.5px;top:499px;width:969px;height:1px;background:#ececec;"></div>
<div class="a" style="left:23.5px;top:521px;width:969px;height:1px;background:#ececec;"></div>
<div class="a" style="left:23.5px;top:543px;width:969px;height:1px;background:#ececec;"></div>
<div class="a" style="left:23.5px;top:565px;width:969px;height:1px;background:#ececec;"></div>
<div class="a" style="left:23.5px;top:587px;width:969px;height:1px;background:#ececec;"></div>
<div class="a" style="left:23.5px;top:609px;width:969px;height:1px;background:#ececec;"></div>
<div class="a" style="left:23.5px;top:631px;width:969px;height:1px;background:#ececec;"></div>
<div class="a" style="left:23.5px;top:653px;width:969px;height:1px;background:#ececec;"></div>
<div class="a" style="left:23.5px;top:675px;width:969px;height:1px;background:#ececec;"></div>
<div class="a" style="left:23.5px;top:697px;width:969px;height:1px;background:#ececec;"></div>
<span class="t " style="left:29.5px;top:393px;font-size:12px;line-height:14px;font-weight:bold;color:#000;letter-spacing:-0.022px;">id Lavori Rich</span>
<span class="t " style="left:170.5px;top:393px;font-size:12px;line-height:14px;font-weight:bold;color:#000;letter-spacing:-0.089px;">Descrizione Lavoro Richiesto</span>
<span class="t " style="left:35px;top:415.5px;font-size:12px;line-height:14px;font-weight:bold;color:#000;">1</span>
<span class="t " style="left:169.5px;top:415.5px;font-size:12px;line-height:14px;font-weight:bold;color:#000;letter-spacing:0.127px;">CONTROLLARE CARICA ARIA CONDIZIONATA</span>
<span class="t " style="left:35px;top:437.5px;font-size:12px;line-height:14px;font-weight:bold;color:#000;">2</span>
<span class="t " style="left:169.5px;top:437.5px;font-size:12px;line-height:14px;font-weight:bold;color:#000;letter-spacing:0.113px;">CAMBIARE SPAZZOLA POSTERIORE</span>
<div class="a" style="left:35px;top:462.5px;width:4px;height:3px;background:#000;border-radius:1.5px;"></div>
<div class="a" style="left:1px;top:739.5px;width:1008px;height:5px;background:#f0f0f0;"></div>
<div class="a" style="left:4px;top:741px;width:89px;height:3px;background:#e6e6e6;"></div>
</body></html>
